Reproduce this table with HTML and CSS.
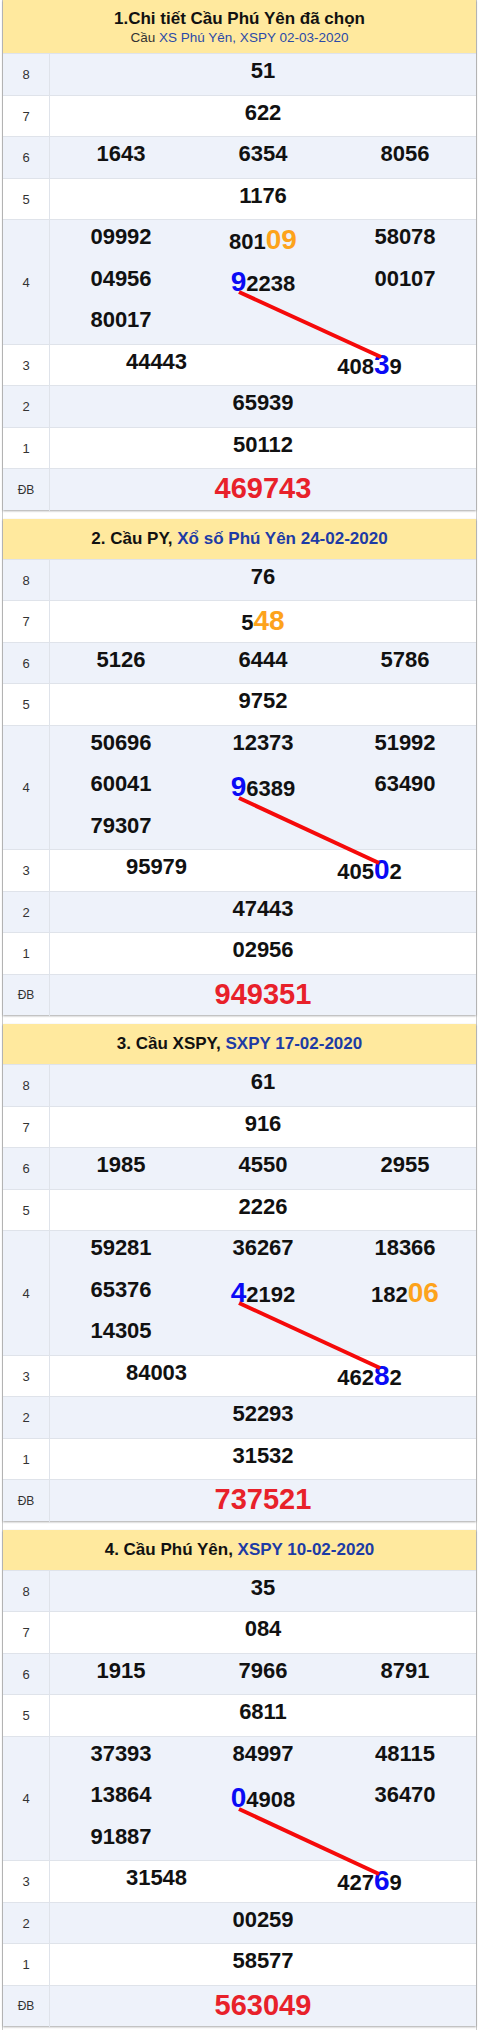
FILE: index.html
```html
<!DOCTYPE html>
<html lang="vi">
<head>
<meta charset="utf-8">
<title>Cầu Phú Yên</title>
<link rel="stylesheet" href="styles.css">
</head>
<body>
<div class="wrap">

  <section class="card">
    <header class="head head-2">
      <div class="title">1.Chi tiết Cầu Phú Yên đã chọn</div>
      <div class="sub"><span class="dark">Cầu</span> XS Phú Yên, XSPY 02-03-2020</div>
    </header>
    <div class="row alt"><div class="lab">8</div><div class="c1"><div class="n">51</div></div></div>
    <div class="row"><div class="lab">7</div><div class="c1"><div class="n">622</div></div></div>
    <div class="row alt"><div class="lab">6</div><div class="c3"><div class="n">1643</div><div class="n">6354</div><div class="n">8056</div></div></div>
    <div class="row"><div class="lab">5</div><div class="c1"><div class="n">1176</div></div></div>
    <div class="row row4 alt">
      <div class="lab">4</div>
      <div class="c3">
        <div class="col"><div class="n">09992</div><div class="n">04956</div><div class="n">80017</div></div>
        <div class="col"><div class="n">801<span class="hl or">09</span></div><div class="n"><span class="hl bl">9</span>2238</div></div>
        <div class="col"><div class="n">58078</div><div class="n">00107</div></div>
      </div>
      <svg class="link" width="473" height="150" viewBox="0 0 473 150"><line x1="236" y1="72" x2="378" y2="137"/></svg>
    </div>
    <div class="row"><div class="lab">3</div><div class="c2"><div class="n">44443</div><div class="n">408<span class="hl bl">3</span>9</div></div></div>
    <div class="row alt"><div class="lab">2</div><div class="c1"><div class="n">65939</div></div></div>
    <div class="row"><div class="lab">1</div><div class="c1"><div class="n">50112</div></div></div>
    <div class="row alt"><div class="lab db">ĐB</div><div class="c1"><div class="n red">469743</div></div></div>
  </section>

  <section class="card">
    <header class="head">
      <div class="title">2. Cầu PY, <span class="blue">Xổ số Phú Yên 24-02-2020</span></div>
    </header>
    <div class="row alt"><div class="lab">8</div><div class="c1"><div class="n">76</div></div></div>
    <div class="row"><div class="lab">7</div><div class="c1"><div class="n">5<span class="hl or">48</span></div></div></div>
    <div class="row alt"><div class="lab">6</div><div class="c3"><div class="n">5126</div><div class="n">6444</div><div class="n">5786</div></div></div>
    <div class="row"><div class="lab">5</div><div class="c1"><div class="n">9752</div></div></div>
    <div class="row row4 alt">
      <div class="lab">4</div>
      <div class="c3">
        <div class="col"><div class="n">50696</div><div class="n">60041</div><div class="n">79307</div></div>
        <div class="col"><div class="n">12373</div><div class="n"><span class="hl bl">9</span>6389</div></div>
        <div class="col"><div class="n">51992</div><div class="n">63490</div></div>
      </div>
      <svg class="link" width="473" height="150" viewBox="0 0 473 150"><line x1="236" y1="72" x2="376" y2="137"/></svg>
    </div>
    <div class="row"><div class="lab">3</div><div class="c2"><div class="n">95979</div><div class="n">405<span class="hl bl">0</span>2</div></div></div>
    <div class="row alt"><div class="lab">2</div><div class="c1"><div class="n">47443</div></div></div>
    <div class="row"><div class="lab">1</div><div class="c1"><div class="n">02956</div></div></div>
    <div class="row alt"><div class="lab db">ĐB</div><div class="c1"><div class="n red">949351</div></div></div>
  </section>

  <section class="card">
    <header class="head">
      <div class="title">3. Cầu XSPY, <span class="blue">SXPY 17-02-2020</span></div>
    </header>
    <div class="row alt"><div class="lab">8</div><div class="c1"><div class="n">61</div></div></div>
    <div class="row"><div class="lab">7</div><div class="c1"><div class="n">916</div></div></div>
    <div class="row alt"><div class="lab">6</div><div class="c3"><div class="n">1985</div><div class="n">4550</div><div class="n">2955</div></div></div>
    <div class="row"><div class="lab">5</div><div class="c1"><div class="n">2226</div></div></div>
    <div class="row row4 alt">
      <div class="lab">4</div>
      <div class="c3">
        <div class="col"><div class="n">59281</div><div class="n">65376</div><div class="n">14305</div></div>
        <div class="col"><div class="n">36267</div><div class="n"><span class="hl bl">4</span>2192</div></div>
        <div class="col"><div class="n">18366</div><div class="n">182<span class="hl or">06</span></div></div>
      </div>
      <svg class="link" width="473" height="150" viewBox="0 0 473 150"><line x1="236" y1="72" x2="377" y2="137"/></svg>
    </div>
    <div class="row"><div class="lab">3</div><div class="c2"><div class="n">84003</div><div class="n">462<span class="hl bl">8</span>2</div></div></div>
    <div class="row alt"><div class="lab">2</div><div class="c1"><div class="n">52293</div></div></div>
    <div class="row"><div class="lab">1</div><div class="c1"><div class="n">31532</div></div></div>
    <div class="row alt"><div class="lab db">ĐB</div><div class="c1"><div class="n red">737521</div></div></div>
  </section>

  <section class="card">
    <header class="head">
      <div class="title">4. Cầu Phú Yên, <span class="blue">XSPY 10-02-2020</span></div>
    </header>
    <div class="row alt"><div class="lab">8</div><div class="c1"><div class="n">35</div></div></div>
    <div class="row"><div class="lab">7</div><div class="c1"><div class="n">084</div></div></div>
    <div class="row alt"><div class="lab">6</div><div class="c3"><div class="n">1915</div><div class="n">7966</div><div class="n">8791</div></div></div>
    <div class="row"><div class="lab">5</div><div class="c1"><div class="n">6811</div></div></div>
    <div class="row row4 alt">
      <div class="lab">4</div>
      <div class="c3">
        <div class="col"><div class="n">37393</div><div class="n">13864</div><div class="n">91887</div></div>
        <div class="col"><div class="n">84997</div><div class="n"><span class="hl bl">0</span>4908</div></div>
        <div class="col"><div class="n">48115</div><div class="n">36470</div></div>
      </div>
      <svg class="link" width="473" height="150" viewBox="0 0 473 150"><line x1="236" y1="72" x2="376" y2="137"/></svg>
    </div>
    <div class="row"><div class="lab">3</div><div class="c2"><div class="n">31548</div><div class="n">427<span class="hl bl">6</span>9</div></div></div>
    <div class="row alt"><div class="lab">2</div><div class="c1"><div class="n">00259</div></div></div>
    <div class="row"><div class="lab">1</div><div class="c1"><div class="n">58577</div></div></div>
    <div class="row alt"><div class="lab db">ĐB</div><div class="c1"><div class="n red">563049</div></div></div>
  </section>

</div>
</body>
</html>
```

FILE: styles.css
```css
* { box-sizing: border-box; }

html, body {
  margin: 0;
  padding: 0;
  background: #ffffff;
}

body {
  font-family: "Liberation Sans", Arial, sans-serif;
  color: #111;
}

.wrap {
  margin-left: 2px;
  width: 475px;
  border-left: 1px solid #c9c9c9;
  border-right: 1px solid #c9c9c9;
  min-height: 2030px;
}

.card {
  background: #fff;
  box-shadow: 0 1px 2px rgba(0, 0, 0, 0.35);
  margin-bottom: 9px;
}

.head {
  background: #ffe99e;
  height: 40px;
  display: flex;
  flex-direction: column;
  justify-content: center;
  align-items: center;
  text-align: center;
}

.head-2 {
  height: 53px;
  padding-top: 1px;
}

.title {
  font-size: 17px;
  font-weight: bold;
  color: #111;
  line-height: 20px;
}

.title .blue {
  color: #1d3ba5;
}

.sub {
  font-size: 13.5px;
  color: #2b4aa8;
  line-height: 17px;
}

.sub .dark {
  color: #333;
}

.row {
  position: relative;
  display: grid;
  grid-template-columns: 47px 1fr;
  height: 41.5px;
  border-top: 1px solid #dfe3ea;
  background: #fff;
}

.row.alt {
  background: #eef2fa;
}

.row4 {
  height: 124.5px;
}

.lab {
  display: flex;
  align-items: center;
  justify-content: center;
  border-right: 1px solid #dfe3ea;
  font-size: 13px;
  color: #333;
}

.lab.db {
  font-size: 12px;
}

.c1, .c2, .c3 {
  display: grid;
  text-align: center;
}

.c1 { grid-template-columns: 1fr; }
.c2 { grid-template-columns: 1fr 1fr; }
.c3 { grid-template-columns: 1fr 1fr 1fr; }

.col {
  display: flex;
  flex-direction: column;
}

.n {
  height: 41.5px;
  padding-top: 4px;
  font-size: 22px;
  font-weight: bold;
  line-height: normal;
  white-space: nowrap;
}

.n.red {
  font-size: 29px;
  padding-top: 3px;
  color: #e8212a;
}

.hl {
  font-size: 28px;
  font-weight: bold;
}

.hl.or { color: #fda31b; }
.hl.bl { color: #0a0af5; }

.link {
  position: absolute;
  left: 0;
  top: 0;
  z-index: 1;
  overflow: visible;
  pointer-events: none;
}

.link line {
  stroke: #f50a0a;
  stroke-width: 4;
}
```
